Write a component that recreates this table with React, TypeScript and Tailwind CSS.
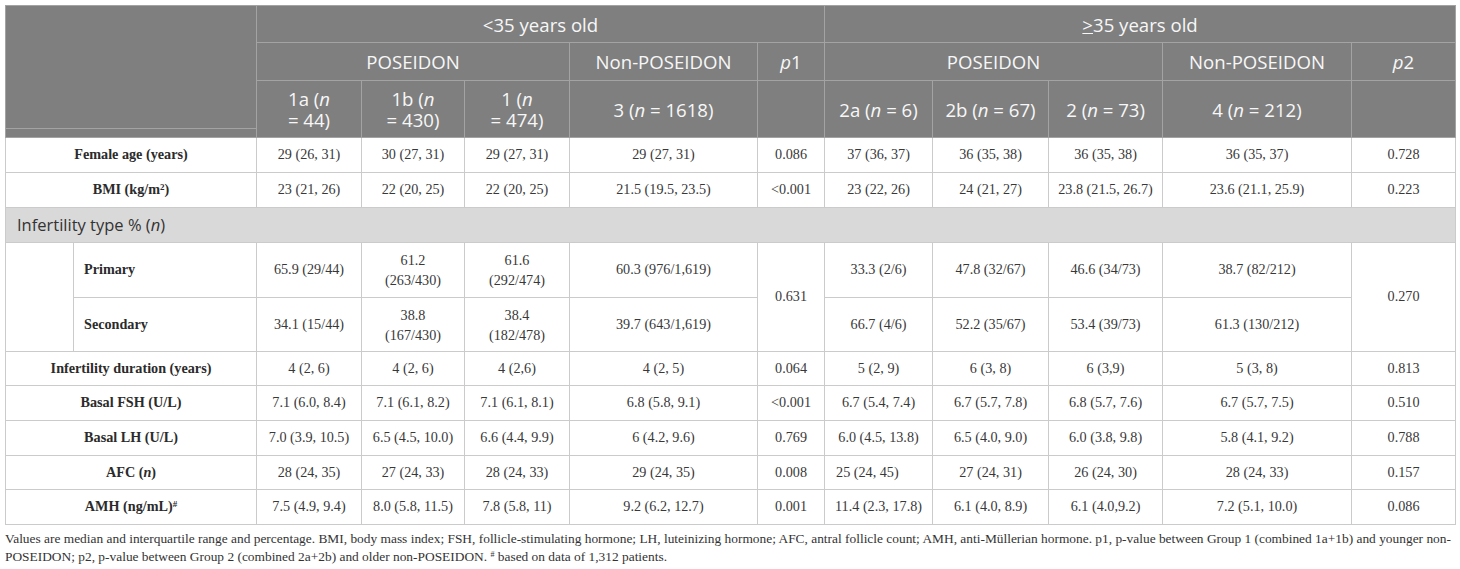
import React from 'react';

const serif = 'font-["Liberation_Serif","Times_New_Roman",serif]';
const sans = 'font-["Open_Sans","Noto_Sans",sans-serif]';

const th = `border border-[#a3a3a3] bg-[#7f7f7f] text-[#f7f7f7] font-normal text-center align-middle ${sans} text-[18.6px] leading-[21px]`;
const td = 'border border-[#cbcbcb] text-center align-middle px-1';

type Row = { label: React.ReactNode; values: string[] };

const rowsTop: Row[] = [
  {
    label: 'Female age (years)',
    values: ['29 (26, 31)', '30 (27, 31)', '29 (27, 31)', '29 (27, 31)', '0.086', '37 (36, 37)', '36 (35, 38)', '36 (35, 38)', '36 (35, 37)', '0.728'],
  },
  {
    label: (
      <>
        BMI (kg/m<sup className="text-[9px]">2</sup>)
      </>
    ),
    values: ['23 (21, 26)', '22 (20, 25)', '22 (20, 25)', '21.5 (19.5, 23.5)', '<0.001', '23 (22, 26)', '24 (21, 27)', '23.8 (21.5, 26.7)', '23.6 (21.1, 25.9)', '0.223'],
  },
];

const rowsBottom: Row[] = [
  {
    label: 'Infertility duration (years)',
    values: ['4 (2, 6)', '4 (2, 6)', '4 (2,6)', '4 (2, 5)', '0.064', '5 (2, 9)', '6 (3, 8)', '6 (3,9)', '5 (3, 8)', '0.813'],
  },
  {
    label: 'Basal FSH (U/L)',
    values: ['7.1 (6.0, 8.4)', '7.1 (6.1, 8.2)', '7.1 (6.1, 8.1)', '6.8 (5.8, 9.1)', '<0.001', '6.7 (5.4, 7.4)', '6.7 (5.7, 7.8)', '6.8 (5.7, 7.6)', '6.7 (5.7, 7.5)', '0.510'],
  },
  {
    label: 'Basal LH (U/L)',
    values: ['7.0 (3.9, 10.5)', '6.5 (4.5, 10.0)', '6.6 (4.4, 9.9)', '6 (4.2, 9.6)', '0.769', '6.0 (4.5, 13.8)', '6.5 (4.0, 9.0)', '6.0 (3.8, 9.8)', '5.8 (4.1, 9.2)', '0.788'],
  },
  {
    label: (
      <>
        AFC (<i>n</i>)
      </>
    ),
    values: ['28 (24, 35)', '27 (24, 33)', '28 (24, 33)', '29 (24, 35)', '0.008', '25 (24, 45)', '27 (24, 31)', '26 (24, 30)', '28 (24, 33)', '0.157'],
  },
  {
    label: (
      <>
        AMH (ng/mL)<sup className="text-[9px]">#</sup>
      </>
    ),
    values: ['7.5 (4.9, 9.4)', '8.0 (5.8, 11.5)', '7.8 (5.8, 11)', '9.2 (6.2, 12.7)', '0.001', '11.4 (2.3, 17.8)', '6.1 (4.0, 8.9)', '6.1 (4.0,9.2)', '7.2 (5.1, 10.0)', '0.086'],
  },
];

const heights = ['h-[34px]', 'h-[35px]', 'h-[35px]', 'h-[34px]', 'h-[35px]'];

function DataRow({ row, h }: { row: Row; h: string }) {
  return (
    <tr className={h}>
      <td colSpan={2} className={`${td} font-bold text-[#2b2b2b]`}>
        {row.label}
      </td>
      {row.values.map((v, i) => (
        // the AFC 2a cell sits left in the source table
        <td key={i} className={`${td} ${v === '25 (24, 45)' ? 'text-left pl-[11px]' : ''}`}>
          {v}
        </td>
      ))}
    </tr>
  );
}

export default function App() {
  return (
    <div className="w-[1460px] h-[569px] overflow-hidden bg-white pt-[5px] pl-[5px]">
      <table className={`w-[1450px] table-fixed border-collapse ${serif} text-[14.2px] text-[#383838]`}>
        <colgroup>
          <col className="w-[68px]" />
          <col className="w-[183px]" />
          <col className="w-[105px]" />
          <col className="w-[103px]" />
          <col className="w-[105px]" />
          <col className="w-[188px]" />
          <col className="w-[67px]" />
          <col className="w-[108px]" />
          <col className="w-[116px]" />
          <col className="w-[114px]" />
          <col className="w-[189px]" />
          <col className="w-[104px]" />
        </colgroup>
        <thead>
          <tr className="h-[37px]">
            <th colSpan={2} rowSpan={3} className={th} />
            <th colSpan={5} className={th}>
              &lt;35 years old
            </th>
            <th colSpan={5} className={th}>
              <u className="decoration-1 underline-offset-[1px]">&gt;</u>35 years old
            </th>
          </tr>
          <tr className="h-[38px]">
            <th colSpan={3} className={th}>
              POSEIDON
            </th>
            <th className={th}>Non-POSEIDON</th>
            <th className={th}>
              <i>p</i>1
            </th>
            <th colSpan={3} className={th}>
              POSEIDON
            </th>
            <th className={th}>Non-POSEIDON</th>
            <th className={th}>
              <i>p</i>2
            </th>
          </tr>
          <tr className="h-[48px]">
            <th rowSpan={2} className={th}>
              1a (<i>n</i>
              <br />= 44)
            </th>
            <th rowSpan={2} className={th}>
              1b (<i>n</i>
              <br />= 430)
            </th>
            <th rowSpan={2} className={th}>
              1 (<i>n</i>
              <br />= 474)
            </th>
            <th rowSpan={2} className={th}>
              3 (<i>n</i> = 1618)
            </th>
            <th rowSpan={2} className={th} />
            <th rowSpan={2} className={th}>
              2a (<i>n</i> = 6)
            </th>
            <th rowSpan={2} className={th}>
              2b (<i>n</i> = 67)
            </th>
            <th rowSpan={2} className={th}>
              2 (<i>n</i> = 73)
            </th>
            <th rowSpan={2} className={th}>
              4 (<i>n</i> = 212)
            </th>
            <th rowSpan={2} className={th} />
          </tr>
          <tr className="h-[9px]">
            <th colSpan={2} className={th} />
          </tr>
        </thead>
        <tbody>
          {rowsTop.map((r, i) => (
            <DataRow key={i} row={r} h="h-[35px]" />
          ))}
          <tr className="h-[35px]">
            <td colSpan={12} className={`border border-[#cbcbcb] bg-[#d9d9d9] px-[11px] text-left ${sans} text-[16.5px] text-[#333333]`}>
              Infertility type % (<i>n</i>)
            </td>
          </tr>
          <tr className="h-[55px]">
            <td rowSpan={2} className={td} />
            <td className={`${td} text-left pl-[10px] font-bold text-[#2b2b2b]`}>Primary</td>
            <td className={td}>65.9 (29/44)</td>
            <td className={`${td} leading-[20px]`}>
              61.2
              <br />
              (263/430)
            </td>
            <td className={`${td} leading-[20px]`}>
              61.6
              <br />
              (292/474)
            </td>
            <td className={td}>60.3 (976/1,619)</td>
            <td rowSpan={2} className={td}>
              0.631
            </td>
            <td className={td}>33.3 (2/6)</td>
            <td className={td}>47.8 (32/67)</td>
            <td className={td}>46.6 (34/73)</td>
            <td className={td}>38.7 (82/212)</td>
            <td rowSpan={2} className={td}>
              0.270
            </td>
          </tr>
          <tr className="h-[54px]">
            <td className={`${td} text-left pl-[10px] font-bold text-[#2b2b2b]`}>Secondary</td>
            <td className={td}>34.1 (15/44)</td>
            <td className={`${td} leading-[20px]`}>
              38.8
              <br />
              (167/430)
            </td>
            <td className={`${td} leading-[20px]`}>
              38.4
              <br />
              (182/478)
            </td>
            <td className={td}>39.7 (643/1,619)</td>
            <td className={td}>66.7 (4/6)</td>
            <td className={td}>52.2 (35/67)</td>
            <td className={td}>53.4 (39/73)</td>
            <td className={td}>61.3 (130/212)</td>
          </tr>
          {rowsBottom.map((r, i) => (
            <DataRow key={i} row={r} h={heights[i]} />
          ))}
        </tbody>
      </table>
      <p className={`${serif} mt-[5px] text-[13.4px] leading-[18px] text-[#333333]`}>
        Values are median and interquartile range and percentage. BMI, body mass index; FSH, follicle-stimulating hormone; LH, luteinizing hormone; AFC, antral follicle count; AMH,
        anti-Müllerian hormone. p1, p-value between Group 1 (combined 1a+1b) and younger non-
        <br />
        POSEIDON; p2, p-value between Group 2 (combined 2a+2b) and older non-POSEIDON. <sup className="text-[8px]">#</sup> based on data of 1,312 patients.
      </p>
    </div>
  );
}
